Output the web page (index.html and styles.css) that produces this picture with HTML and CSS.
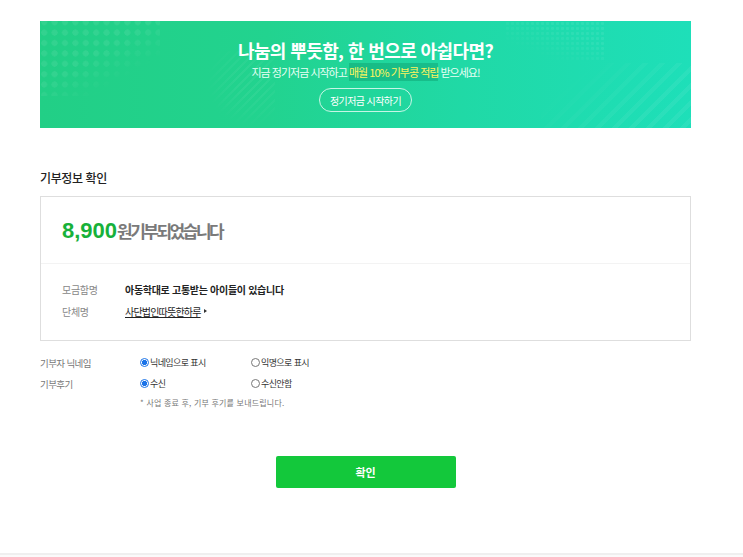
FILE: index.html
```html
<!DOCTYPE html>
<html lang="ko">
<head>
<meta charset="utf-8">
<title>기부정보 확인</title>
<link rel="stylesheet" href="styles.css">
</head>
<body>
<div class="page">
  <section class="banner">
    <div class="banner-dots"></div>
    <div class="banner-dots2"></div>
    <div class="banner-stripes"></div>
    <div class="banner-stripes2"></div>
    <h2 class="banner-title">나눔의 뿌듯함, 한 번으로 아쉽다면?</h2>
    <p class="banner-sub">지금 정기저금 시작하고 <span class="hl">매월 10% 기부콩 적립</span> 받으세요!</p>
    <a class="banner-btn">정기저금 시작하기</a>
  </section>

  <h3 class="section-title">기부정보 확인</h3>

  <div class="card">
    <div class="card-amount"><span class="amount">8,900</span><span class="amount-text">원기부되었습니다</span></div>
    <div class="card-info">
      <div class="info-row"><span class="info-label">모금함명</span><span class="info-value strong">아동학대로 고통받는 아이들이 있습니다</span></div>
      <div class="info-row"><span class="info-label">단체명</span><span class="info-value"><span class="link">사단법인따뜻한하루</span><span class="arrow"></span></span></div>
    </div>
  </div>

  <div class="options">
    <div class="opt-row">
      <span class="opt-label">기부자 닉네임</span>
      <span class="opt"><span class="radio checked"></span>닉네임으로 표시</span>
      <span class="opt"><span class="radio"></span>익명으로 표시</span>
    </div>
    <div class="opt-row">
      <span class="opt-label">기부후기</span>
      <span class="opt"><span class="radio checked"></span>수신</span>
      <span class="opt"><span class="radio"></span>수신안함</span>
    </div>
    <p class="note">* 사업 종료 후, 기부 후기를 보내드립니다.</p>
  </div>

  <div class="actions"><button class="confirm">확인</button></div>
</div>
<div class="footer"></div>
</body>
</html>
```

FILE: styles.css
```css
html, body {
  margin: 0;
  padding: 0;
  background: #fff;
}
body {
  font-family: "Noto Sans CJK KR", "Noto Sans", sans-serif;
  color: #222;
}
.page {
  width: 651px;
  margin-left: 40px;
  padding-top: 21px;
}
.banner {
  position: relative;
  height: 107px;
  box-sizing: border-box;
  padding-top: 17px;
  display: flex;
  flex-direction: column;
  align-items: center;
  overflow: hidden;
  background: linear-gradient(90deg, #22cf86 0%, #22d38f 35%, #20d9a6 65%, #1edfb9 100%);
}
.banner-dots {
  position: absolute;
  left: 0;
  top: 0;
  width: 120px;
  height: 75px;
  background-image: radial-gradient(circle, rgba(255,255,255,0.08) 2.8px, transparent 3.3px);
  background-size: 10.4px 10.4px;
  background-position: -1px -4px;
  -webkit-mask-image: linear-gradient(150deg, #000 45%, transparent 75%);
  mask-image: linear-gradient(150deg, #000 45%, transparent 75%);
}
.banner-dots2 {
  position: absolute;
  left: 465px;
  top: 0;
  width: 100px;
  height: 40px;
  background-image: radial-gradient(circle, rgba(255,255,255,0.07) 1.3px, transparent 1.8px);
  background-size: 5px 5px;
  -webkit-mask-image: linear-gradient(200deg, #000 30%, transparent 80%);
  mask-image: linear-gradient(200deg, #000 30%, transparent 80%);
}
.banner-stripes {
  position: absolute;
  right: 0;
  bottom: 0;
  width: 150px;
  height: 65px;
  background: repeating-linear-gradient(135deg, rgba(255,255,255,0.06) 0 4px, transparent 4px 12px);
  -webkit-mask-image: linear-gradient(320deg, #000 30%, transparent 80%);
  mask-image: linear-gradient(320deg, #000 30%, transparent 80%);
}
.banner-stripes2 {
  position: absolute;
  left: 155px;
  top: 30px;
  width: 80px;
  height: 77px;
  background: repeating-linear-gradient(135deg, rgba(255,255,255,0.05) 0 2px, transparent 2px 6px);
  -webkit-mask-image: radial-gradient(circle at 70% 40%, #000 20%, transparent 65%);
  mask-image: radial-gradient(circle at 70% 40%, #000 20%, transparent 65%);
}
.banner-title {
  position: relative;
  margin: 0;
  font-size: 18px;
  line-height: 24px;
  font-weight: 700;
  color: #fff;
  letter-spacing: -0.6px;
}
.banner-sub {
  position: relative;
  margin: 1px 0 0;
  font-size: 11px;
  line-height: 18px;
  color: #eafff6;
  letter-spacing: -1px;
}
.hl {
  color: #fff45c;
  background: rgba(10, 140, 95, 0.35);
  padding: 1px 0;
}
.banner-btn {
  position: relative;
  margin-top: 7px;
  width: 93px;
  height: 24px;
  box-sizing: border-box;
  border: 1px solid rgba(255,255,255,0.75);
  border-radius: 12px;
  display: flex;
  align-items: center;
  justify-content: center;
  font-size: 10px;
  color: #fff;
  letter-spacing: -0.6px;
}
.section-title {
  margin: 41px 0 9px;
  font-size: 12px;
  line-height: 18px;
  font-weight: 500;
  color: #222;
  letter-spacing: -0.4px;
}
.card {
  border: 1px solid #dedede;
}
.card-amount {
  padding: 19px 21px 17px;
  line-height: 30px;
  border-bottom: 1px solid #f3f3f3;
  display: flex;
  align-items: baseline;
}
.amount {
  font-family: "Liberation Sans", Arial, sans-serif;
  font-weight: 700;
  font-size: 22px;
  color: #17b13a;
}
.amount-text {
  font-size: 17px;
  font-weight: 700;
  color: #7a7a7a;
  letter-spacing: -2.5px;
}
.card-info {
  padding: 14px 21px 18px;
}
.info-row {
  display: flex;
  align-items: center;
  height: 22px;
  font-size: 10px;
  letter-spacing: -0.3px;
}
.info-label {
  width: 63px;
  color: #888;
}
.info-value {
  color: #222;
  display: flex;
  align-items: center;
}
.info-value.strong {
  font-weight: 700;
}
.link {
  text-decoration: underline;
  text-underline-offset: 1px;
  letter-spacing: -0.8px;
}
.arrow {
  margin-left: 3px;
  width: 0;
  height: 0;
  border-top: 2.5px solid transparent;
  border-bottom: 2.5px solid transparent;
  border-left: 3px solid #333;
}
.options {
  margin-top: 11px;
}
.opt-row {
  display: flex;
  align-items: center;
  height: 21px;
  font-size: 9px;
  letter-spacing: -0.6px;
}
.opt-label {
  width: 100px;
  color: #777;
  font-size: 9.5px;
}
.opt {
  width: 111px;
  display: flex;
  align-items: center;
  color: #333;
}
.radio {
  width: 9px;
  height: 9px;
  box-sizing: border-box;
  border: 1px solid #777;
  border-radius: 50%;
  margin-right: 1px;
  background: #fff;
}
.radio.checked {
  border-color: #1a73e8;
  background: radial-gradient(circle, #1a73e8 0 2.4px, #fff 2.9px);
}
.note {
  margin: 0 0 0 100px;
  font-size: 8px;
  line-height: 18px;
  color: #777;
  letter-spacing: 0.2px;
}
.actions {
  margin-top: 44px;
  display: flex;
  justify-content: center;
}
.confirm {
  width: 180px;
  height: 32px;
  border: none;
  border-radius: 2px;
  background: #13c83b;
  color: #fff;
  font-family: "Noto Sans CJK KR", sans-serif;
  font-size: 11px;
  font-weight: 700;
  padding: 0;
}
.footer {
  margin-top: 65px;
  border-top: 2px solid #efefef;
  height: 10px;
  background: #fafafa;
}
```
